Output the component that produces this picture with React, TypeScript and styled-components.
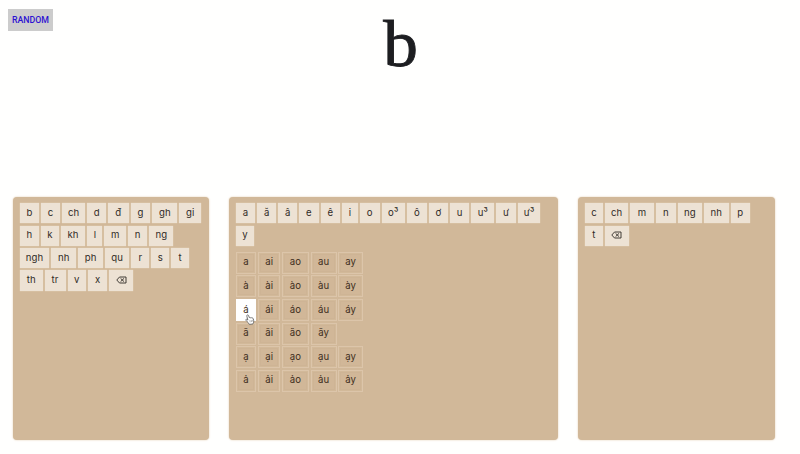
import React from 'react';
import styled, { createGlobalStyle } from 'styled-components';

const GlobalStyle = createGlobalStyle`
  * { box-sizing: border-box; }
  body { margin: 0; background: #fffffe; }
`;

const Page = styled.div`
  height: 454px;
  display: flex;
  flex-direction: column;
  overflow: hidden;
  font-family: Inter, 'Liberation Sans', sans-serif;
`;

const Header = styled.header`
  height: 196.5px;
  display: grid;
  grid-template-columns: 1fr auto 1fr;
  align-items: start;
`;

const RandomButton = styled.button`
  justify-self: start;
  margin: 9px 0 0 8px;
  width: 45px;
  height: 22px;
  padding: 0;
  border: 0;
  background: #cccccc;
  color: #2c12d2;
  font: 500 8.8px/21px Roboto, sans-serif;
`;

const Word = styled.div`
  padding-top: 3px;
  font: 66px/82px 'Liberation Serif', serif;
  color: #1d1e21;
  -webkit-text-stroke: 0.9px #1d1e21;
  transform: scaleX(1.05);
`;

const Panels = styled.main`
  display: grid;
  grid-template-columns: 196px 329px 196.5px;
  column-gap: 20px;
  padding-left: 13px;
`;

const Panel = styled.section`
  height: 243px;
  padding: 6.7px 0 0 6.8px;
  border-radius: 4px;
  background: #d1b899;
  box-shadow: 0 0 2px #dfc8ab;
`;

const KeyRow = styled.div`
  display: flex;
  gap: 2px;
  height: 20.3px;
  margin-bottom: 2.1px;
`;

const Key = styled.button<{ $w: number }>`
  flex: none;
  width: ${(p) => p.$w}px;
  padding: 0 0 1px;
  border: 0;
  display: flex;
  align-items: center;
  justify-content: center;
  background: #ede2d4;
  box-shadow: 0 0 1px #f1dfc8;
  color: #302b27;
  font: 400 9.6px/18px Inter, sans-serif;
  letter-spacing: 0.1px;
`;

const Rhymes = styled.div`
  display: grid;
  grid-template-columns: 20.5px 22.5px 27px 26px 25px;
  grid-auto-rows: 22px;
  gap: 1.6px;
  margin-top: 6px;
`;

const Rhyme = styled.button<{ $active?: boolean; $start?: boolean }>`
  ${(p) => (p.$start ? 'grid-column-start: 1;' : '')}
  padding: 0 0 1px;
  border: 1px solid ${(p) => (p.$active ? '#fff' : '#dcc5aa')};
  background: ${(p) => (p.$active ? '#fff' : '#d1b798')};
  box-shadow: ${(p) => (p.$active ? 'none' : 'inset 0 0 0 1px #d2b999, inset 0 0 0 2px #ceb495')};
  color: #3d2d20;
  font: 400 9.6px/18px Inter, sans-serif;
  letter-spacing: 0.1px;
  position: relative;
`;

const Pointer = styled.svg`
  position: absolute;
  left: 8px;
  top: 14px;
  z-index: 1;
`;

type KeySpec = [string, number];

const initials: KeySpec[][] = [
  [['b', 19.3], ['c', 18.8], ['ch', 23.5], ['d', 18.5], ['đ', 20.7], ['g', 19.8], ['gh', 25], ['gi', 21.5]],
  [['h', 19.3], ['k', 17.7], ['kh', 24.6], ['l', 15], ['m', 21.7], ['n', 19.3], ['ng', 24]],
  [['ngh', 29.6], ['nh', 24.9], ['ph', 24.6], ['qu', 24.5], ['r', 18], ['s', 17.7], ['t', 18]],
  [['th', 22.8], ['tr', 21], ['v', 18.5], ['x', 19], ['⌫', 24]],
];

const vowels: KeySpec[][] = [
  [['a', 19.5], ['ă', 19], ['â', 19], ['e', 19.3], ['ê', 19.3], ['i', 16], ['o', 19.7], ['o³', 23.3],
    ['ô', 20], ['ơ', 19], ['u', 19.4], ['u³', 23], ['ư', 19.6], ['ư³', 22.4]],
  [['y', 18.3]],
];

const finals: KeySpec[][] = [
  [['c', 18.3], ['ch', 23], ['m', 23.7], ['n', 20], ['ng', 24], ['nh', 25], ['p', 19]],
  [['t', 18], ['⌫', 24]],
];

const rhymes = [
  ['a', 'ai', 'ao', 'au', 'ay'],
  ['à', 'ài', 'ào', 'àu', 'ày'],
  ['á', 'ái', 'áo', 'áu', 'áy'],
  ['ã', 'ãi', 'ão', 'ãy'],
  ['ạ', 'ại', 'ạo', 'ạu', 'ạy'],
  ['ả', 'ải', 'ảo', 'ảu', 'ảy'],
];

const EraseIcon = () => (
  <svg width="11" height="8" viewBox="0 0 11 8" fill="none" stroke="#302b27" strokeWidth="0.9">
    <path d="M3.5 1H10v6H3.5L.8 4zM4.6 2.4l3.4 3.2M8 2.4L4.6 5.6" />
  </svg>
);

const HandPointer = () => (
  <Pointer width="10" height="11" viewBox="0 0 10 11">
    <path
      d="M2.1 1.1c.7-.6 1.3-.1 1.6.7l.6 1.8c.5-.4 1-.3 1.3.2.5-.4 1-.2 1.3.3.6-.3 1.2 0 1.4.7l.4 1.8c.3 1.3-.1 2.1-.5 2.7L7.9 10 4.3 10.4 3.7 9.2C2.6 8.2 1.5 7.1.9 6.2c-.4-.8.5-1.3 1.2-.7l.8.6-1-3.6c-.2-.6-.2-1.1.2-1.4z"
      fill="#fff"
      stroke="#555"
      strokeWidth="0.8"
    />
    <path d="M4.8 6.3l.4 2M6.2 6l.4 2M7.5 5.8l.3 1.8" stroke="#777" strokeWidth="0.5" />
  </Pointer>
);

const Keys = ({ rows }: { rows: KeySpec[][] }) => (
  <>
    {rows.map((row, r) => (
      <KeyRow key={r}>
        {row.map(([label, width]) => (
          <Key key={label} $w={width} aria-label={label}>
            {label === '⌫' ? <EraseIcon /> : label}
          </Key>
        ))}
      </KeyRow>
    ))}
  </>
);

export default function App() {
  return (
    <Page>
      <GlobalStyle />
      <Header>
        <RandomButton>RANDOM</RandomButton>
        <Word>b</Word>
      </Header>
      <Panels>
        <Panel><Keys rows={initials} /></Panel>
        <Panel>
          <Keys rows={vowels} />
          <Rhymes>
            {rhymes.map((row) =>
              row.map((label, c) => (
                <Rhyme key={label} $start={c === 0} $active={label === 'á'}>
                  {label}
                  {label === 'á' && <HandPointer />}
                </Rhyme>
              )),
            )}
          </Rhymes>
        </Panel>
        <Panel><Keys rows={finals} /></Panel>
      </Panels>
    </Page>
  );
}
